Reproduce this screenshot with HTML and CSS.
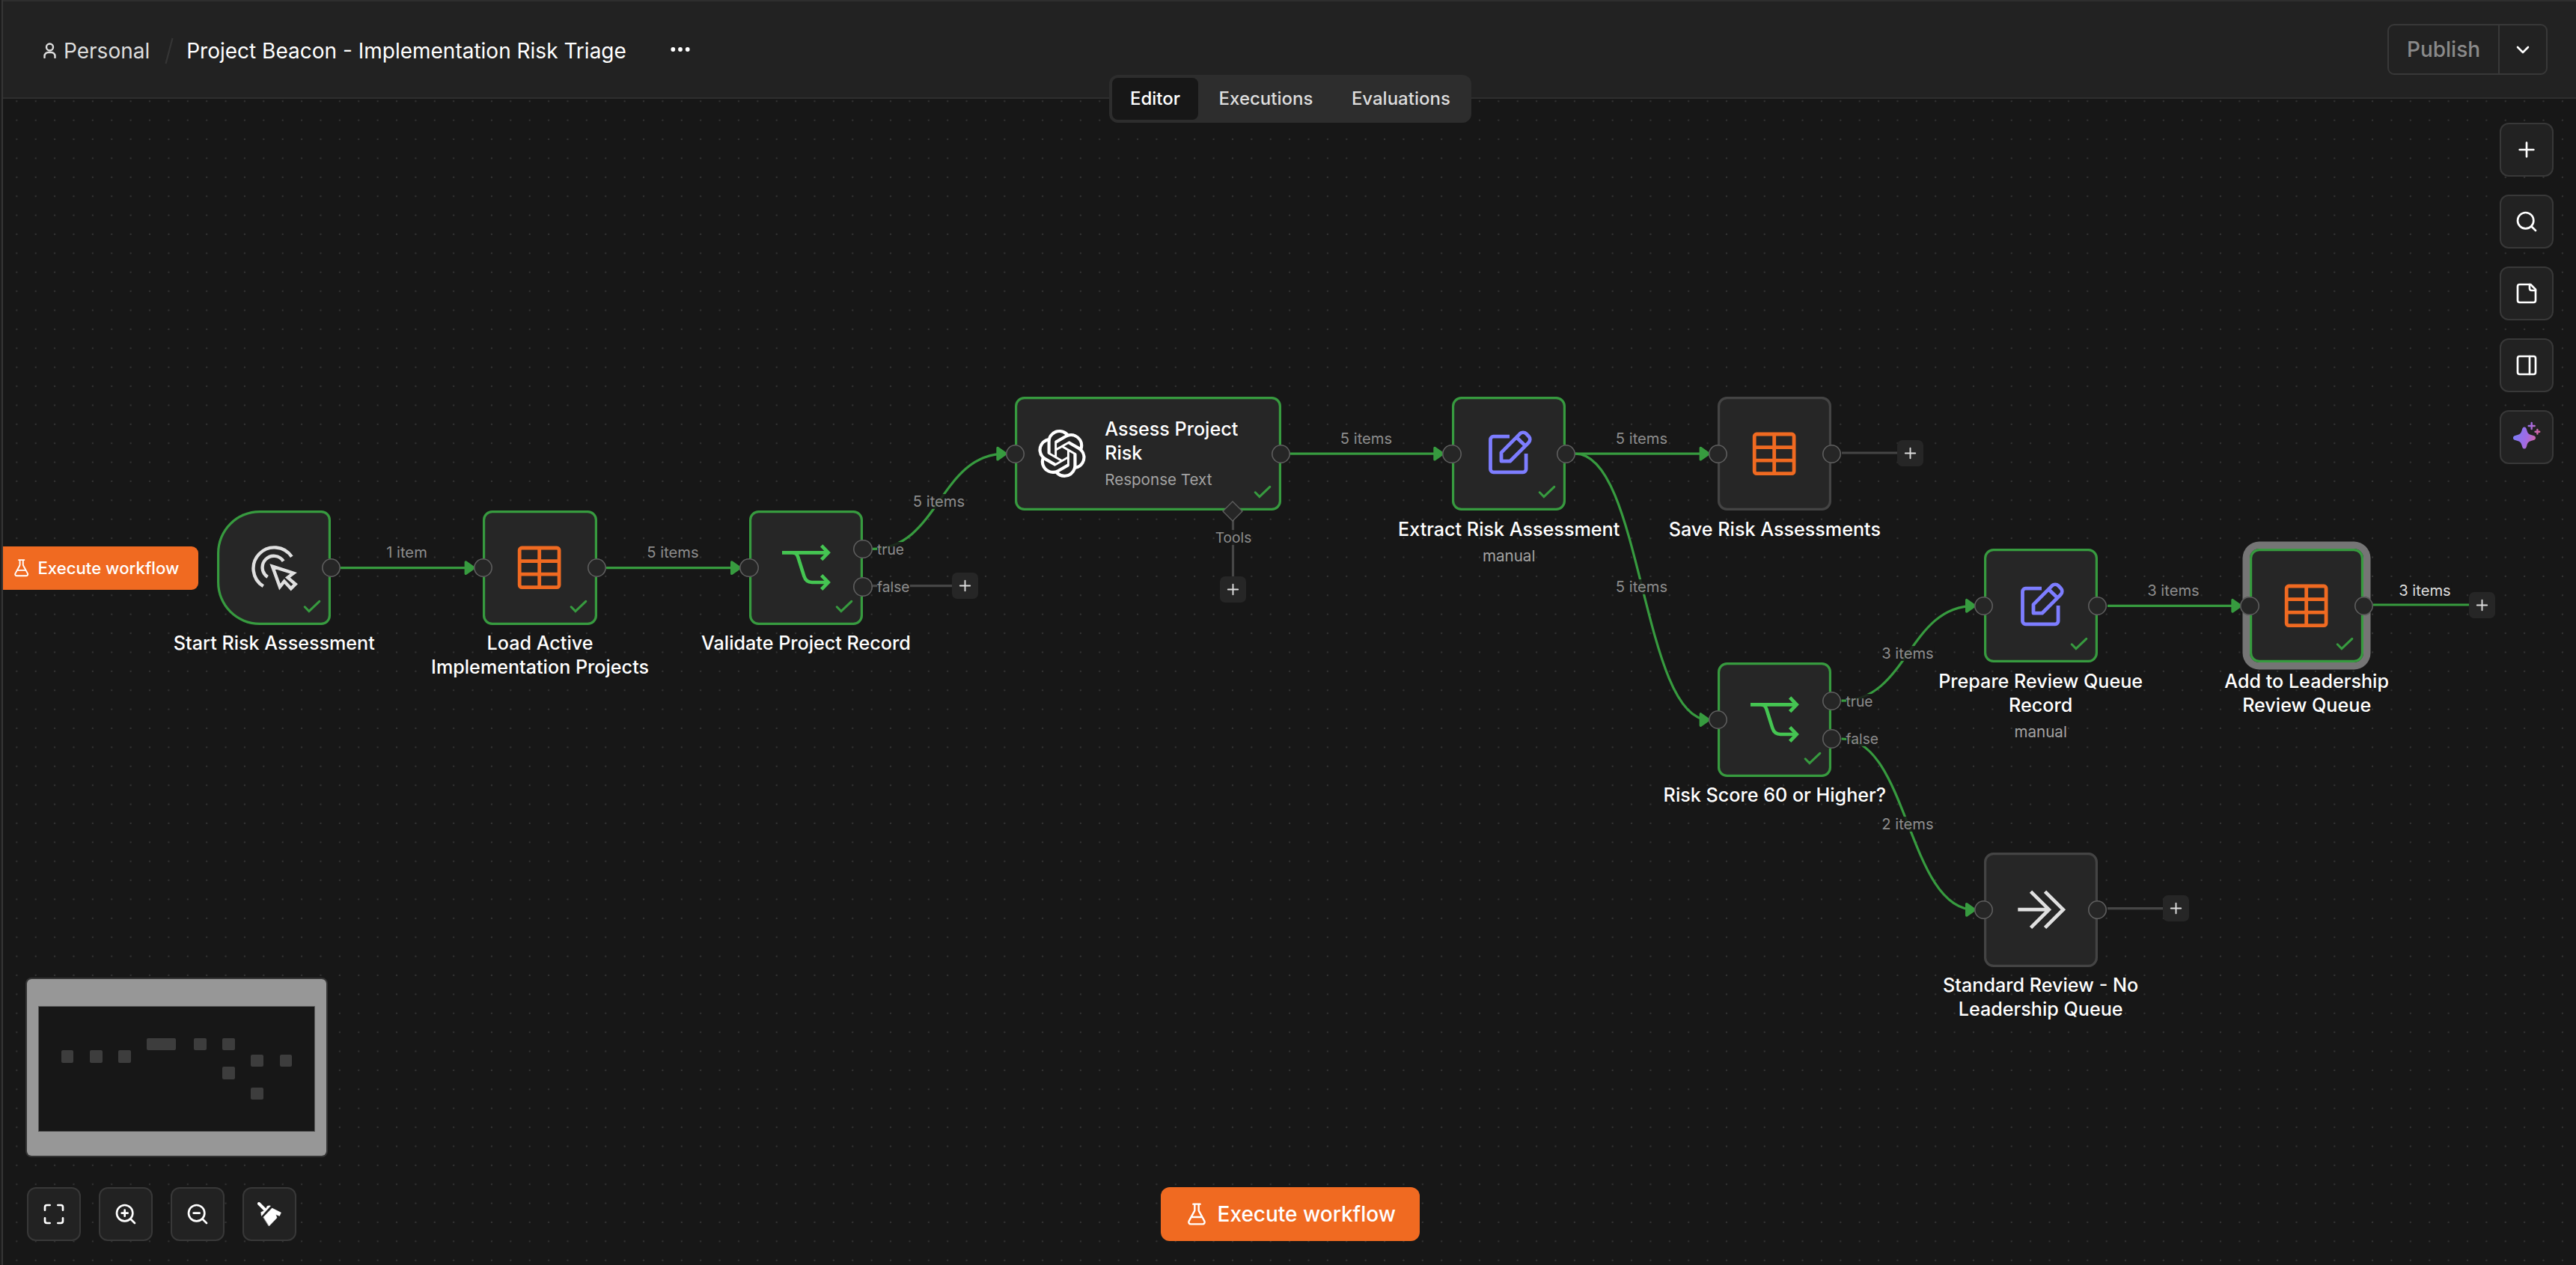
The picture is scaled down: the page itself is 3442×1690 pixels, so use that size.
FILE: index.html
```html
<!DOCTYPE html>
<html lang="en">
<head>
<meta charset="utf-8">
<title>Project Beacon - Implementation Risk Triage</title>
<link rel="stylesheet" href="styles.css">
</head>
<body>
<svg class="defs" width="0" height="0" aria-hidden="true">
  <defs>
    <linearGradient id="spark" gradientUnits="userSpaceOnUse" x1="2" y1="16" x2="33" y2="26">
      <stop offset="0" stop-color="#7b7bf5"/><stop offset="0.55" stop-color="#a16be3"/><stop offset="1" stop-color="#d9659a"/>
    </linearGradient>
    <symbol id="i-flask" viewBox="0 0 24 24"><path d="M14 2v6a2 2 0 0 0 .245.96l5.51 10.08A2 2 0 0 1 18 22H6a2 2 0 0 1-1.755-2.96l5.51-10.08A2 2 0 0 0 10 8V2M6.453 15h11.094M8.5 2h7"/></symbol>
    <symbol id="i-plus" viewBox="0 0 24 24"><path d="M5 12h14M12 5v14"/></symbol>
    <symbol id="i-table" viewBox="0 0 152.3 152.3"><g fill="none" stroke="#f06a21" stroke-width="4.8"><rect x="49.2" y="50" width="52.9" height="52.6" rx="3"/><path d="M75.7 50v52.6M49.2 67.6h52.9M49.2 85.2h52.9"/></g></symbol>
    <symbol id="i-edit" viewBox="0 0 152.3 152.3"><g fill="none" stroke="#7d7dff" stroke-width="4.8"><path d="M77 53.2H55.5a4 4 0 0 0-4 4v39.6a4 4 0 0 0 4 4h39.6a4 4 0 0 0 4-4V76"/><path stroke-linejoin="round" d="M66 86.2V74.6L90.8 49.6a6.2 6.2 0 0 1 8.6 0l3.1 3.1a6.2 6.2 0 0 1 0 8.6L77.6 86.2ZM86.5 54.5l11.5 11"/></g></symbol>
    <symbol id="i-branch" viewBox="0 0 457 457"><g fill="none" stroke="#45c552" stroke-width="14"><path d="M132 169H320M172 169c14 0 19 4 24 18l24 76c5 16 14 25 32 25H320"/><path d="M290 141l27 28-27 28M290 260l27 28-27 28"/></g></symbol>
    <symbol id="i-click" viewBox="0 0 152.3 152.3"><g fill="none" stroke="#e0e0e0" stroke-width="4.4"><path d="M99.8 61.8A28 28 0 1 0 61.800 101.200"/><path d="M88.600 67.800A15.200 15.200 0 1 0 67.600 88.800"/><path d="M74 74.600L102.200 83.700L94.400 89.600L104.700 98.400L98.800 104.300L89.800 94.600L83.900 102Z"/></g></symbol>
    <symbol id="i-noop" viewBox="0 0 152.3 152.3"><g fill="none" stroke="#e0e0e0" stroke-width="4.7"><path d="M45.3 76.2H87M62.5 52.2L86.8 76.2L62.5 100.3M81.5 52.2L105.800 76.2L81.5 100.3"/></g></symbol>
    <symbol id="i-check" viewBox="0 0 24 20"><path d="M2.2 9.800L7.900 15.6L21.800 2.300" fill="none" stroke="#379b3f" stroke-width="3" stroke-linecap="round"/></symbol>
    <symbol id="i-openai" viewBox="0 0 24 24"><path fill="#fff" d="M22.2819 9.8211a5.9847 5.9847 0 0 0-.5157-4.9108 6.0462 6.0462 0 0 0-6.5098-2.9A6.0651 6.0651 0 0 0 4.9807 4.1818a5.9847 5.9847 0 0 0-3.9977 2.9 6.0462 6.0462 0 0 0 .7427 7.0966 5.98 5.98 0 0 0 .511 4.9107 6.051 6.051 0 0 0 6.5146 2.9001A5.9847 5.9847 0 0 0 13.2599 24a6.0557 6.0557 0 0 0 5.7718-4.2058 5.9894 5.9894 0 0 0 3.9977-2.9001 6.0557 6.0557 0 0 0-.7475-7.0729zm-9.022 12.6081a4.4755 4.4755 0 0 1-2.8764-1.0408l.1419-.0804 4.7783-2.7582a.7948.7948 0 0 0 .3927-.6813v-6.7369l2.02 1.1686a.071.071 0 0 1 .038.052v5.5826a4.504 4.504 0 0 1-4.4945 4.4944zm-9.6607-4.1254a4.4708 4.4708 0 0 1-.5346-3.0137l.142.0852 4.783 2.7582a.7712.7712 0 0 0 .7806 0l5.8428-3.3685v2.3324a.0804.0804 0 0 1-.0332.0615L9.74 19.9502a4.4992 4.4992 0 0 1-6.1408-1.6464zM2.3408 7.8956a4.485 4.485 0 0 1 2.3655-1.9728V11.6a.7664.7664 0 0 0 .3879.6765l5.8144 3.3543-2.0201 1.1685a.0757.0757 0 0 1-.071 0l-4.8303-2.7865A4.504 4.504 0 0 1 2.3408 7.872zm16.5963 3.8558L13.1038 8.364 15.1192 7.2a.0757.0757 0 0 1 .071 0l4.8303 2.7913a4.4944 4.4944 0 0 1-.6765 8.1042v-5.6772a.79.79 0 0 0-.407-.667zm2.0107-3.0231l-.142-.0852-4.7735-2.7818a.7759.7759 0 0 0-.7854 0L9.409 9.2297V6.8974a.0662.0662 0 0 1 .0284-.0615l4.8303-2.7866a4.4992 4.4992 0 0 1 6.6802 4.66zM8.3065 12.863l-2.02-1.1638a.0804.0804 0 0 1-.038-.0567V6.0742a4.4992 4.4992 0 0 1 7.3757-3.4537l-.142.0805L8.704 5.459a.7948.7948 0 0 0-.3927.6813zm1.0976-2.3654l2.602-1.4998 2.6069 1.4998v2.9994l-2.5974 1.4997-2.6067-1.4997Z"/></symbol>
  </defs>
</svg>

<div class="app">
  <div class="rail"></div>
  <main class="main">
    <header class="header">
      <nav class="crumbs">
        <a class="crumb"><svg class="user" viewBox="0 0 17 21"><circle cx="8.500" cy="6" r="4.500"/><path d="M1.500 20v-2a5 5 0 0 1 5-5h4a5 5 0 0 1 5 5v2"/></svg><span class="personal">Personal</span></a>
        <svg class="slash" viewBox="0 0 12 36"><path d="M1.500 35L10.500 1"/></svg>
        <span class="title">Project Beacon - Implementation Risk Triage</span>
        <svg class="more" viewBox="0 0 26 8"><circle cx="3.300" cy="4" r="2.900"/><circle cx="13" cy="4" r="2.900"/><circle cx="22.700" cy="4" r="2.900"/></svg>
      </nav>
      <div class="publish"><span class="publish-text">Publish</span><span class="publish-more"><svg viewBox="0 0 18 11"><path d="M2 2l7 7 7-7"/></svg></span></div>
    </header>
  </main>

  <div class="canvas">
    <svg class="edges" width="3442" height="1690">
      <defs><pattern id="dots" x="9.640" y="-4.290" width="25.385" height="25.385" patternUnits="userSpaceOnUse"><circle cx="12.690" cy="12.690" r="1.100" fill="#363636"/></pattern></defs>
      <rect x="4" y="132" width="3438" height="1558" fill="url(#dots)"/>
      <g class="idle">
        <path d="M1166 782.600H1274M2461 605H2536M2816 1213.700H2892M1647.500 694V772"/>
      </g>
      <g class="run">
        <path d="M455 758.700H636M810 758.700H980M1724 606.200H1930M2105 606.200H2285M2816 809.300H2996M3171 808H3300"/>
        <path d="M1165.700 733.300C1254.600 733.300 1254.600 606.200 1343.500 606.200"/>
        <path d="M2105 606.200C2194 606.200 2194 961.600 2283 961.600"/>
        <path d="M2460.500 936.200C2549.400 936.200 2549.400 809.300 2638.300 809.300"/>
        <path d="M2460.500 987C2549.400 987 2549.400 1215.400 2638.300 1215.400"/>
      </g>
      <g class="heads">
        <path d="M622.300 751v15.400l11-7.700zM977.700 751v15.400l11-7.700zM1333 598.500v15.400l11-7.700zM1917 598.500v15.400l11-7.700zM2272.300 598.500v15.400l11-7.700zM2272.300 953.900v15.400l11-7.700zM2627.700 801.600v15.400l11-7.700zM2627.700 1207.700v15.400l11-7.700zM2983 801.600v15.400l11-7.700z"/>
      </g>
    </svg>

    <span class="tag e1">1 item</span>
    <span class="tag e2">5 items</span>
    <span class="tag e3">5 items</span>
    <span class="tag e4">5 items</span>
    <span class="tag e5">5 items</span>
    <span class="tag e6">5 items</span>
    <span class="tag e7">3 items</span>
    <span class="tag e8">2 items</span>
    <span class="tag e9">3 items</span>
    <span class="tag e10 bright">3 items</span>
    <span class="tag tools">Tools</span>
    <span class="port p1">true</span>
    <span class="port p2">false</span>
    <span class="port p3">true</span>
    <span class="port p4">false</span>

    <span class="add a1"><svg><use href="#i-plus"/></svg></span>
    <span class="add a2"><svg><use href="#i-plus"/></svg></span>
    <span class="add a3"><svg><use href="#i-plus"/></svg></span>
    <span class="add a4"><svg><use href="#i-plus"/></svg></span>
    <span class="add a5"><svg><use href="#i-plus"/></svg></span>

    <button class="node-run"><svg><use href="#i-flask"/></svg><span>Execute workflow</span></button>

    <div class="node trigger ok n-start"><svg class="pic"><use href="#i-click"/></svg><svg class="check"><use href="#i-check"/></svg><i class="dot out"></i>
      <div class="label"><div class="name">Start Risk Assessment</div></div></div>
    <div class="node ok n-load"><svg class="pic"><use href="#i-table"/></svg><svg class="check"><use href="#i-check"/></svg><i class="dot in"></i><i class="dot out"></i>
      <div class="label"><div class="name">Load Active<br>Implementation Projects</div></div></div>
    <div class="node ok n-validate"><svg class="pic"><use href="#i-branch"/></svg><svg class="check"><use href="#i-check"/></svg><i class="dot in"></i><i class="dot out upper"></i><i class="dot out lower"></i>
      <div class="label"><div class="name">Validate Project Record</div></div></div>
    <div class="node wide ok n-assess"><svg class="logo"><use href="#i-openai"/></svg>
      <div class="info"><div class="name">Assess Project<br>Risk</div><div class="sub">Response Text</div></div>
      <svg class="check"><use href="#i-check"/></svg><i class="dot in"></i><i class="dot out"></i>
      <svg class="diamond" viewBox="0 0 28 28"><path d="M14 1L27 14L14 27L1 14Z"/></svg></div>
    <div class="node ok n-extract"><svg class="pic"><use href="#i-edit"/></svg><svg class="check"><use href="#i-check"/></svg><i class="dot in"></i><i class="dot out"></i>
      <div class="label"><div class="name">Extract Risk Assessment</div><div class="sub">manual</div></div></div>
    <div class="node n-save"><svg class="pic"><use href="#i-table"/></svg><i class="dot in"></i><i class="dot out"></i>
      <div class="label"><div class="name">Save Risk Assessments</div></div></div>
    <div class="node ok n-risk"><svg class="pic"><use href="#i-branch"/></svg><svg class="check"><use href="#i-check"/></svg><i class="dot in"></i><i class="dot out upper"></i><i class="dot out lower"></i>
      <div class="label"><div class="name">Risk Score 60 or Higher?</div></div></div>
    <div class="node ok n-prepare"><svg class="pic"><use href="#i-edit"/></svg><svg class="check"><use href="#i-check"/></svg><i class="dot in"></i><i class="dot out"></i>
      <div class="label"><div class="name">Prepare Review Queue<br>Record</div><div class="sub">manual</div></div></div>
    <div class="node ok selected n-add"><svg class="pic"><use href="#i-table"/></svg><svg class="check"><use href="#i-check"/></svg><i class="dot in"></i><i class="dot out"></i>
      <div class="label"><div class="name">Add to Leadership<br>Review Queue</div></div></div>
    <div class="node n-standard"><svg class="pic"><use href="#i-noop"/></svg><i class="dot in"></i><i class="dot out"></i>
      <div class="label"><div class="name">Standard Review - No<br>Leadership Queue</div></div></div>
  </div>

  <div class="tabs"><span class="tab active">Editor</span><span class="tab">Executions</span><span class="tab">Evaluations</span></div>

  <div class="tools-right">
    <button class="tool"><svg><use href="#i-plus"/></svg></button>
    <button class="tool"><svg viewBox="0 0 24 24"><circle cx="11" cy="11" r="8"/><path d="M21 21l-4.340-4.340"/></svg></button>
    <button class="tool"><svg viewBox="0 0 24 24"><path d="M16 3H5a2 2 0 0 0-2 2v14a2 2 0 0 0 2 2h14a2 2 0 0 0 2-2V8Z"/><path d="M15 3v4a2 2 0 0 0 2 2h4"/></svg></button>
    <button class="tool"><svg viewBox="0 0 24 24"><rect x="3" y="3" width="18" height="18" rx="2"/><path d="M15 3v18"/></svg></button>
    <button class="tool"><svg class="sparkle" viewBox="0 0 38 38"><path class="star" d="M16 7.500c2 0 2.600 1.500 3.400 4.500 1 3.600 2.200 5 5.600 6l3.400 1c2 .600 2.600 1.500 2.600 3s-.600 2.400-2.600 3l-3.400 1c-3.400 1-4.600 2.400-5.600 6-.800 3-1.400 4.500-3.400 4.500s-2.600-1.500-3.400-4.500c-1-3.600-2.200-5-5.600-6l-3.400-1c-2-.600-2.600-1.500-2.600-3s.600-2.400 2.600-3l3.400-1c3.400-1 4.600-2.400 5.600-6 .800-3 1.400-4.500 3.400-4.500Z"/><path d="M25.700 2v8M21.700 6h8M33.400 11v5.600M30.600 13.800h5.600"/></svg></button>
  </div>

  <svg class="minimap" viewBox="0 0 400 236">
    <rect width="400" height="236" fill="#979797"/>
    <rect x="15.500" y="36.500" width="369" height="167" fill="#171717" stroke="#5a5a5a"/>
    <g fill="#3d3d3d">
      <rect x="46" y="95" width="16" height="17" rx="2"/><rect x="84" y="95" width="17" height="17" rx="2"/><rect x="122" y="95" width="17" height="17" rx="2"/>
      <rect x="160" y="79" width="39" height="16" rx="2"/><rect x="223" y="79" width="17" height="16" rx="2"/><rect x="261" y="79" width="17" height="16" rx="2"/>
      <rect x="299" y="101" width="17" height="16" rx="2"/><rect x="338" y="101" width="16" height="16" rx="2"/><rect x="261" y="117" width="17" height="17" rx="2"/><rect x="299" y="145" width="17" height="16" rx="2"/>
    </g>
  </svg>

  <div class="tools-bottom">
    <button class="tool"><svg viewBox="0 0 24 24"><path d="M8 3H5a2 2 0 0 0-2 2v3M21 8V5a2 2 0 0 0-2-2h-3M3 16v3a2 2 0 0 0 2 2h3M16 21h3a2 2 0 0 0 2-2v-3"/></svg></button>
    <button class="tool"><svg viewBox="0 0 24 24"><circle cx="11" cy="11" r="8"/><path d="M21 21l-4.350-4.350M11 8v6M8 11h6"/></svg></button>
    <button class="tool"><svg viewBox="0 0 24 24"><circle cx="11" cy="11" r="8"/><path d="M21 21l-4.350-4.350M8 11h6"/></svg></button>
    <button class="tool"><svg class="broom" viewBox="0 0 32 32"><path class="stick" d="M2 2L9.500 9.500"/><path d="M5 13.500L10.500 10.500L13 5.500Q15 4.500 17.500 5L5.500 18.500Q4.500 15.500 5 13.500Z"/><path d="M8 20L19.500 8L31.500 14L29.500 18.500L24.500 16.500L26 21L15.500 32Z"/></svg></button>
  </div>

  <button class="execute"><svg><use href="#i-flask"/></svg><span>Execute workflow</span></button>
</div>
</body>
</html>
```

FILE: styles.css
```css
* { box-sizing: border-box; }
body {
  margin: 0;
  width: 3442px;
  height: 1690px;
  overflow: hidden;
  background: #171717;
  color: #fff;
  font-family: Inter, "Liberation Sans", sans-serif;
}
button { font: inherit; color: inherit; border: 0; margin: 0; padding: 0; }
.defs { position: absolute; }

.app { position: relative; display: flex; width: 3442px; height: 1690px; }
.rail { width: 4px; background: #1c1c1c; border-right: 2px solid #353535; position: relative; z-index: 2; }
.main { flex: 1; position: relative; z-index: 1; pointer-events: none; }

.header {
  height: 132px;
  background: #222;
  border-top: 2px solid #2e2e2e;
  border-bottom: 2px solid #2e2e2e;
  display: flex;
  justify-content: space-between;
  align-items: center;
  padding: 0 38px 0 54px;
}
.crumbs { display: flex; align-items: center; font-size: 28px; line-height: 36px; padding-top: 3px; }
.crumb { display: flex; align-items: center; gap: 10px; color: #ddd; }
.user { width: 17px; height: 21px; fill: none; stroke: #ddd; stroke-width: 2.4; stroke-linecap: round; }
.slash { width: 12px; height: 36px; margin-left: 20px; fill: none; stroke: #353535; stroke-width: 2.2; }
.title { margin-left: 17px; white-space: nowrap; }
.more { width: 26px; height: 8px; margin: -3px 0 0 59px; fill: #fff; }

.publish {
  display: flex;
  width: 214px;
  height: 68px;
  border: 2px solid #383838;
  border-radius: 9px;
  font-size: 28px;
  font-weight: 500;
  color: #8a8a8a;
}
.publish-text { flex: 1; display: flex; align-items: center; justify-content: center; border-right: 2px solid #383838; }
.publish-more { width: 62px; display: flex; align-items: center; justify-content: center; }
.publish-more svg { width: 18px; height: 11px; fill: none; stroke: #fff; stroke-width: 2.6; stroke-linecap: round; stroke-linejoin: round; }

.tabs {
  position: absolute;
  left: 1482px;
  top: 100px;
  z-index: 3;
  display: flex;
  padding: 4px;
  border-radius: 12px;
  background: #2d2d2d;
  font-size: 24px;
  font-weight: 500;
  line-height: 56px;
  color: #ddd;
}
.tab { padding: 0 24px; border-radius: 8px; }
.tab + .tab { margin-left: 3.500px; }
.tab.active { background: #171717; color: #fff; }

.canvas { position: absolute; inset: 0; }
.edges { position: absolute; left: 0; top: 0; }
.idle { fill: none; stroke: #464646; stroke-width: 3.2; }
.run { fill: none; stroke: #379b3f; stroke-width: 3.2; }
.heads { fill: #379b3f; stroke: #379b3f; stroke-width: 3.4; stroke-linejoin: round; }

.tag, .port {
  position: absolute;
  height: 20px;
  font-size: 20.200px;
  line-height: 20px;
  color: #8c8c8c;
  background: rgba(23, 23, 23, .85);
  white-space: nowrap;
}
.tag { transform: translate(-50%, -50%); }
.port { transform: translateY(-50%); left: 1172px; font-size: 19.200px; }
.bright { color: #ddd; }
.e1 { left: 543.500px; top: 738.300px; }
.e2 { left: 899px; top: 738.300px; }
.e3 { left: 1254.500px; top: 670px; }
.e4 { left: 1825.500px; top: 586px; }
.e5 { left: 2193.500px; top: 586px; }
.e6 { left: 2193.500px; top: 784px; }
.e7 { left: 2549px; top: 872.500px; }
.e8 { left: 2549px; top: 1101px; }
.e9 { left: 2904px; top: 789px; }
.e10 { left: 3240px; top: 789px; }
.tools { left: 1648px; top: 717.500px; font-size: 19.200px; }
.p1 { top: 733.500px; }
.p2 { top: 783.500px; }
.p3, .p4 { left: 2466.500px; }
.p3 { top: 936.500px; }
.p4 { top: 986.500px; }

.add {
  position: absolute;
  display: flex;
  align-items: center;
  justify-content: center;
  width: 35px;
  height: 35px;
  border-radius: 7px;
  background: #262626;
}
.add svg { width: 23px; height: 23px; stroke: #ddd; stroke-width: 2; stroke-linecap: round; }
.a1 { left: 1272px; top: 765px; }
.a2 { left: 1630px; top: 770px; }
.a3 { left: 2534.500px; top: 587.500px; }
.a4 { left: 2890px; top: 1196px; }
.a5 { left: 3299px; top: 790.500px; }

.node {
  position: absolute;
  width: 152.300px;
  height: 152.300px;
  border-radius: 12.700px;
  background: #262626;
  box-shadow: inset 0 0 0 3.200px #444;
}
.node.ok { box-shadow: inset 0 0 0 3.200px #379b3f; }
.node.selected { box-shadow: inset 0 0 0 3.200px #379b3f, 0 0 0 9.500px #757575; }
.node.trigger { border-radius: 57px 12.700px 12.700px 57px; }
.node.wide { width: 355.400px; display: flex; align-items: center; padding-left: 31px; }
.pic { display: block; width: 152.300px; height: 152.300px; }
.logo { width: 64px; height: 64px; flex: none; }
.info { margin-left: 25px; }
.name { font-size: 25.150px; font-weight: 500; line-height: 31.700px; color: #fff; white-space: nowrap; }
.sub { font-size: 20.600px; line-height: 26px; color: #a3a3a3; white-space: nowrap; }
.info .sub { margin-top: 6px; }
.label { position: absolute; left: 50%; top: 162px; transform: translateX(-50%); text-align: center; }
.label .sub { margin-top: 6px; }
.check { position: absolute; right: 13px; bottom: 14px; width: 24px; height: 20px; }
.dot {
  position: absolute;
  top: 63.500px;
  width: 25.400px;
  height: 25.400px;
  border-radius: 50%;
  background: #262626;
  box-shadow: inset 0 0 0 1.600px #5e5e5e;
}
.in { left: -12.700px; }
.out { right: -12.700px; }
.upper { top: 38.300px; }
.lower { top: 89px; }
.diamond { position: absolute; left: 277px; top: 138.500px; width: 28px; height: 28px; fill: #262626; stroke: #5e5e5e; stroke-width: 1.4; }

.n-start { left: 290.200px; top: 682.300px; }
.n-load { left: 645.400px; top: 682.300px; }
.n-validate { left: 1000.800px; top: 682.300px; }
.n-assess { left: 1356.200px; top: 530px; }
.n-extract { left: 1940px; top: 530px; }
.n-save { left: 2295.200px; top: 530px; }
.n-risk { left: 2295.200px; top: 885.400px; }
.n-prepare { left: 2650.500px; top: 733.100px; }
.n-add { left: 3006px; top: 733.100px; }
.n-standard { left: 2650.500px; top: 1139.400px; }

.node-run, .execute {
  position: absolute;
  display: flex;
  align-items: center;
  background: #f06a21;
  color: #fff;
  font-weight: 500;
}
.node-run { left: 4px; top: 730px; width: 260.500px; height: 57.500px; padding-left: 12px; border-radius: 0 9px 9px 0; font-size: 22.200px; gap: 9px; }
.node-run svg { width: 25.400px; height: 25.400px; }
.execute { left: 1551px; top: 1586px; width: 346px; height: 72px; padding-left: 32px; border-radius: 12px; font-size: 28px; gap: 11.500px; }
.execute svg { width: 32px; height: 32px; }
.node-run svg, .execute svg { fill: none; stroke: #fff; stroke-width: 1.8; stroke-linecap: round; stroke-linejoin: round; }

.tools-right { position: absolute; left: 3340px; top: 164px; display: flex; flex-direction: column; gap: 24px; }
.tools-bottom { position: absolute; left: 36px; top: 1586px; display: flex; gap: 24px; }
.tool {
  display: flex;
  align-items: center;
  justify-content: center;
  width: 72px;
  height: 72px;
  border: 2px solid #383838;
  border-radius: 12px;
  background: #222;
}
.tool svg { width: 32px; height: 32px; fill: none; stroke: #fff; stroke-width: 2; stroke-linecap: round; stroke-linejoin: round; }
.tool .sparkle { width: 38px; height: 38px; margin-top: -5px; stroke: url(#spark); stroke-width: 2.4; }
.tool .sparkle .star { fill: url(#spark); stroke: none; }
.tool .broom { fill: #fff; stroke-width: .5; }
.tool .broom .stick { stroke-width: 4; }

.minimap {
  position: absolute;
  left: 34px;
  top: 1306px;
  width: 404px;
  height: 240px;
  border: 2px solid #333;
  border-radius: 8px;
}
```
